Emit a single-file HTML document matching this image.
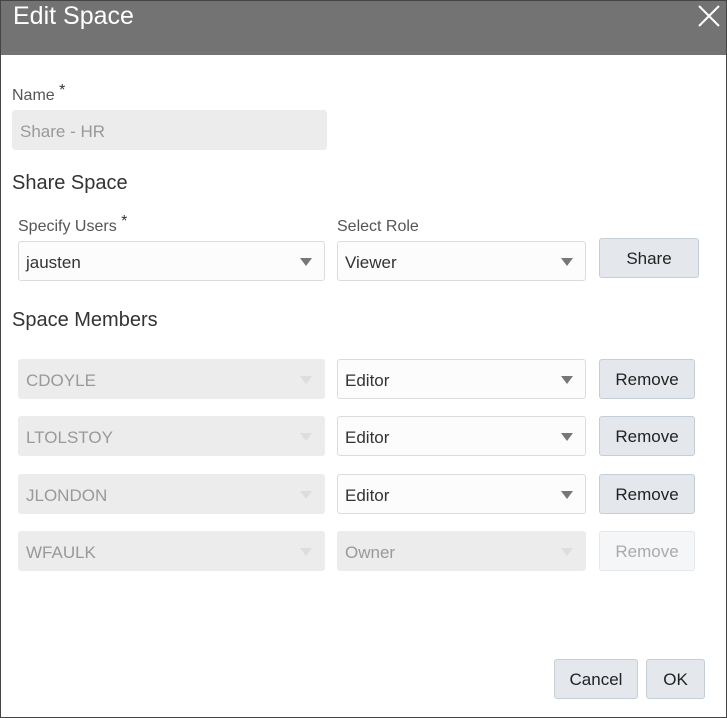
<!DOCTYPE html>
<html><head><style>
*{box-sizing:border-box;margin:0;padding:0}
body{width:727px;height:718px;background:#fff;font-family:"Liberation Sans",sans-serif;position:relative;overflow:hidden}
.frame{position:absolute;left:0;top:0;width:727px;height:718px;border:1px solid #444}
.hdr{position:absolute;left:0;top:0;width:727px;height:55px;background:#737373;border:1px solid #444;border-bottom:none}
.title{position:absolute;left:12px;top:1px;font-size:25px;color:#fff}
.x{position:absolute;left:697px;top:4px}
.a{position:absolute}
.lbl{font-size:16px;color:#555}
.h{font-size:20px;color:#333}
.inp{position:absolute;border:1px solid #dcdcdc;background:#fcfcfc;border-radius:3px;font-size:17px;color:#333;padding:11px 7px 0;height:40px}
.dis{background:#ececec;border-color:#ececec;color:#999}
.arr{position:absolute;right:12px;top:16px;width:0;height:0;border-left:6px solid transparent;border-right:6px solid transparent;border-top:8px solid #777}
.dis .arr{border-top-color:#ddd}
.btn{position:absolute;border:1px solid #c4ced7;background:#e4e8ec;border-radius:3px;font-size:17px;color:#222;text-align:center;line-height:40px;height:40px}
.bdis{background:#f5f6f7;border-color:#e4e8ec;color:#aaa}
</style></head><body>
<div class="hdr"><div class="title">Edit Space</div>
<svg class="x" width="22" height="22" viewBox="0 0 22 22"><path d="M1 1L21 21M21 1L1 21" stroke="#fff" stroke-width="2"/></svg></div>
<div class="frame"></div>
<div class="a lbl" style="left:12px;top:87px">Name <span style="position:relative;top:-5px;color:#333">*</span></div>
<div class="inp dis" style="left:12px;top:110px;width:315px;border-color:#ececec">Share - HR</div>
<div class="a h" style="left:12px;top:172px">Share Space</div>
<div class="a lbl" style="left:18px;top:218px">Specify Users <span style="position:relative;top:-5px;color:#333">*</span></div>
<div class="a lbl" style="left:337px;top:218px">Select Role</div>
<div class="inp" style="left:18px;top:241px;width:307px">jausten<div class="arr"></div></div>
<div class="inp" style="left:337px;top:241px;width:249px">Viewer<div class="arr"></div></div>
<div class="btn" style="left:599px;top:238px;width:100px">Share</div>
<div class="a h" style="left:12px;top:309px">Space Members</div>

<div class="inp dis" style="left:18px;top:359px;width:307px">CDOYLE<div class="arr"></div></div>
<div class="inp" style="left:337px;top:359px;width:249px">Editor<div class="arr"></div></div>
<div class="btn" style="left:599px;top:359px;width:96px">Remove</div>

<div class="inp dis" style="left:18px;top:416px;width:307px">LTOLSTOY<div class="arr"></div></div>
<div class="inp" style="left:337px;top:416px;width:249px">Editor<div class="arr"></div></div>
<div class="btn" style="left:599px;top:416px;width:96px">Remove</div>

<div class="inp dis" style="left:18px;top:474px;width:307px">JLONDON<div class="arr"></div></div>
<div class="inp" style="left:337px;top:474px;width:249px">Editor<div class="arr"></div></div>
<div class="btn" style="left:599px;top:474px;width:96px">Remove</div>

<div class="inp dis" style="left:18px;top:531px;width:307px">WFAULK<div class="arr"></div></div>
<div class="inp dis" style="left:337px;top:531px;width:249px">Owner<div class="arr"></div></div>
<div class="btn bdis" style="left:599px;top:531px;width:96px">Remove</div>

<div class="btn" style="left:554px;top:659px;width:84px">Cancel</div>
<div class="btn" style="left:646px;top:659px;width:59px">OK</div>
</body></html>
